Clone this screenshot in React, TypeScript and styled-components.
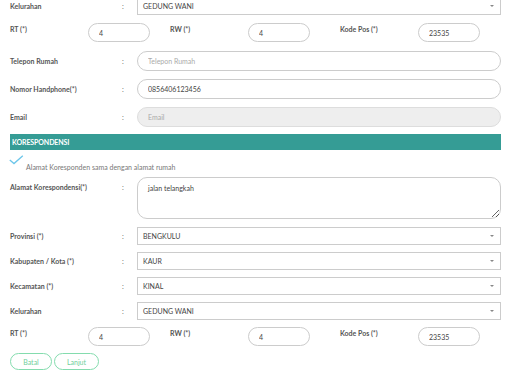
import React from "react";
import styled, { createGlobalStyle } from "styled-components";

const GlobalStyle = createGlobalStyle`
  html, body {
    margin: 0;
    background: #fff;
    font-family: Lato, "Open Sans", sans-serif;
  }
  * { box-sizing: border-box; }
`;

const Page = styled.div`
  width: 524px;
  height: 373px;
  overflow: hidden;
`;

const Form = styled.div`
  margin-top: -3px;
  padding: 0 23px 0 10px;
`;

const FormRow = styled.div<{ $mb?: number }>`
  display: grid;
  grid-template-columns: 112px 15px 1fr;
  align-items: start;
  margin-bottom: ${(p) => p.$mb ?? 8}px;
`;

const Label = styled.div<{ $lh?: number }>`
  font-size: 7px;
  font-weight: 700;
  color: #555;
  line-height: ${(p) => p.$lh ?? 20}px;
  white-space: nowrap;
`;

const Colon = styled(Label)`
  font-weight: 400;
  color: #666;
`;

const SelectBox = styled.div`
  height: 18px;
  border: 1px solid #ccc;
  display: flex;
  align-items: center;
  justify-content: space-between;
  padding: 0 6px 0 5px;
  font-size: 7px;
  color: #444;
`;

const Caret = styled.span`
  width: 0;
  height: 0;
  border-left: 2px solid transparent;
  border-right: 2px solid transparent;
  border-top: 2.5px solid #888;
`;

const TextInput = styled.input<{ $h?: number }>`
  display: block;
  width: 100%;
  height: ${(p) => p.$h ?? 20}px;
  border: 1px solid #ccc;
  border-radius: 10px;
  padding: 0 10px;
  font-family: Lato, sans-serif;
  font-size: 7px;
  color: #444;
  background: #fff;
  outline: none;

  &::placeholder {
    color: #aaa;
  }

  &:disabled {
    background: #eee;
    border-color: #ddd;
  }
`;

const TextArea = styled.textarea`
  display: block;
  width: 100%;
  height: 42px;
  border: 1px solid #ccc;
  border-radius: 10px;
  padding: 6px 10px;
  font-family: Lato, sans-serif;
  font-size: 7px;
  color: #444;
  outline: none;
`;

const RtRow = styled.div<{ $mb?: number }>`
  display: flex;
  margin-bottom: ${(p) => p.$mb ?? 8}px;
`;

const RtGroup = styled.div<{ $w: number }>`
  display: grid;
  grid-template-columns: 78px 62px;
  width: ${(p) => p.$w}px;
  align-items: start;
`;

const SectionBar = styled.div`
  height: 16px;
  background: #359c95;
  color: #fff;
  font-size: 7px;
  font-weight: 700;
  line-height: 16px;
  padding-left: 2px;
  letter-spacing: -0.1px;
`;

const CheckRow = styled.div`
  height: 27px;
  display: flex;
  align-items: flex-start;
`;

const CheckIcon = styled.svg`
  margin-top: 5px;
  margin-left: -1px;
  flex: none;
`;

const CheckText = styled.span`
  margin-top: 13px;
  margin-left: 2px;
  font-size: 7px;
  color: #777;
  line-height: 8px;
`;

const Buttons = styled.div`
  display: flex;
  gap: 2px;
`;

const OutlineButton = styled.button<{ $w: number }>`
  width: ${(p) => p.$w}px;
  height: 17px;
  border: 1px solid #84dcae;
  border-radius: 9px;
  background: #fff;
  color: #6fcf9a;
  font-family: Lato, sans-serif;
  font-size: 7px;
  padding: 0;
`;

const Select: React.FC<{ value: string }> = ({ value }) => (
  <SelectBox>
    <span>{value}</span>
    <Caret />
  </SelectBox>
);

const SelectRow: React.FC<{ label: string; value: string; mb?: number }> = ({
  label,
  value,
  mb,
}) => (
  <FormRow $mb={mb ?? 7}>
    <Label $lh={18}>{label}</Label>
    <Colon $lh={18}>:</Colon>
    <Select value={value} />
  </FormRow>
);

const RtFields: React.FC<{ mb?: number }> = ({ mb }) => (
  <RtRow $mb={mb}>
    <RtGroup $w={160}>
      <Label $lh={12}>RT (*)</Label>
      <TextInput $h={19} defaultValue="4" />
    </RtGroup>
    <RtGroup $w={170}>
      <Label $lh={12}>RW (*)</Label>
      <TextInput $h={19} defaultValue="4" />
    </RtGroup>
    <RtGroup $w={160}>
      <Label $lh={12}>Kode Pos (*)</Label>
      <TextInput $h={19} defaultValue="23535" />
    </RtGroup>
  </RtRow>
);

export default function App() {
  return (
    <Page>
      <GlobalStyle />
      <Form>
        <SelectRow label="Kelurahan" value="GEDUNG WANI" mb={8} />
        <RtFields mb={9} />

        <FormRow>
          <Label>Telepon Rumah</Label>
          <Colon>:</Colon>
          <TextInput placeholder="Telepon Rumah" />
        </FormRow>
        <FormRow>
          <Label>Nomor Handphone(*)</Label>
          <Colon>:</Colon>
          <TextInput defaultValue="0856406123456" />
        </FormRow>
        <FormRow $mb={7}>
          <Label>Email</Label>
          <Colon>:</Colon>
          <TextInput placeholder="Email" disabled />
        </FormRow>

        <SectionBar>KORESPONDENSI</SectionBar>
        <CheckRow>
          <CheckIcon width="15" height="10" viewBox="0 0 15 10">
            <polyline
              points="0.8,5 5,8.6 13.8,0.8"
              fill="none"
              stroke="#6cc6ea"
              strokeWidth="1.3"
            />
          </CheckIcon>
          <CheckText>Alamat Koresponden sama dengan alamat rumah</CheckText>
        </CheckRow>

        <FormRow>
          <Label>Alamat Korespondensi(*)</Label>
          <Colon>:</Colon>
          <TextArea defaultValue="jalan telangkah" />
        </FormRow>

        <SelectRow label="Provinsi (*)" value="BENGKULU" />
        <SelectRow label="Kabupaten / Kota (*)" value="KAUR" />
        <SelectRow label="Kecamatan (*)" value="KINAL" />
        <SelectRow label="Kelurahan" value="GEDUNG WANI" />
        <RtFields mb={7} />

        <Buttons>
          <OutlineButton $w={42}>Batal</OutlineButton>
          <OutlineButton $w={45}>Lanjut</OutlineButton>
        </Buttons>
      </Form>
    </Page>
  );
}
